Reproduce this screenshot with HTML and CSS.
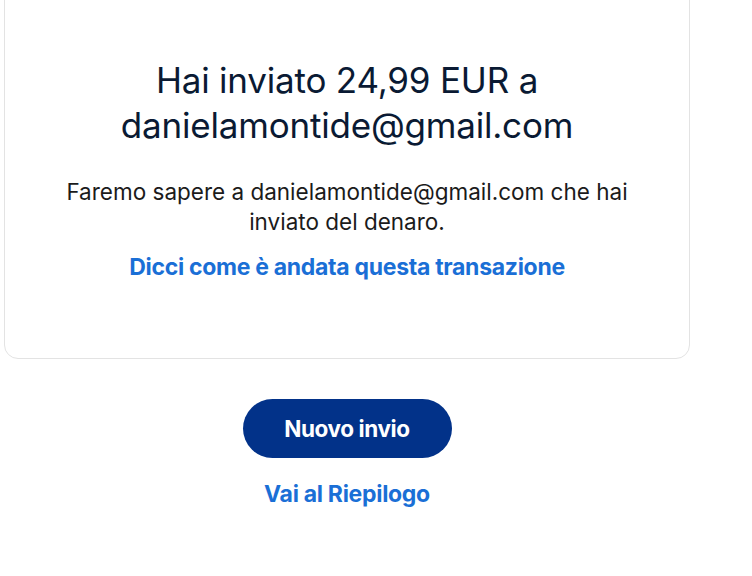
FILE: index.html
```html
<!DOCTYPE html>
<html lang="it">
<head>
<meta charset="utf-8">
<link rel="stylesheet" href="styles.css">
</head>
<body>
<div class="page">
  <section class="card">
    <h1 class="title">Hai inviato 24,99 EUR a danielamontide@gmail.com</h1>
    <p class="note">Faremo sapere a danielamontide@gmail.com che hai inviato del denaro.</p>
    <a class="link feedback" href="#">Dicci come è andata questa transazione</a>
  </section>
  <div class="actions">
    <button class="primary">Nuovo invio</button>
    <a class="link summary" href="#">Vai al Riepilogo</a>
  </div>
</div>
</body>
</html>
```
FILE: styles.css
```css
html, body {
  margin: 0;
  padding: 0;
  background: #ffffff;
}
body {
  font-family: Inter, "Noto Sans", Arial, sans-serif;
  width: 752px;
  height: 576px;
  overflow: hidden;
}
.page {
  width: 686px;
  margin-left: 4px;
}
.card {
  margin-top: -20px;
  border: 1px solid #e3e3e3;
  border-radius: 14px;
  padding: 77px 20px 76px;
  display: flex;
  flex-direction: column;
  align-items: center;
  text-align: center;
}
.title {
  margin: 0;
  width: 520px;
  font-size: 35px;
  line-height: 45px;
  font-weight: 400;
  color: #0a1a33;
  letter-spacing: -0.2px;
}
.note {
  margin: 29px 0 0;
  width: 580px;
  font-size: 22.5px;
  line-height: 30px;
  color: #1b1b1b;
  letter-spacing: 0;
}
.link {
  color: #1a6fd6;
  font-weight: 700;
  text-decoration: none;
  font-size: 23px;
  letter-spacing: -0.3px;
}
.feedback {
  margin-top: 15px;
  line-height: 30px;
}
.actions {
  display: flex;
  flex-direction: column;
  align-items: center;
  padding-top: 40px;
}
.primary {
  width: 209px;
  height: 59px;
  border: none;
  border-radius: 30px;
  background: #023289;
  color: #ffffff;
  font-family: inherit;
  font-size: 22.5px;
  font-weight: 700;
  letter-spacing: -0.4px;
}
.summary {
  margin-top: 21px;
  line-height: 30px;
}
```
